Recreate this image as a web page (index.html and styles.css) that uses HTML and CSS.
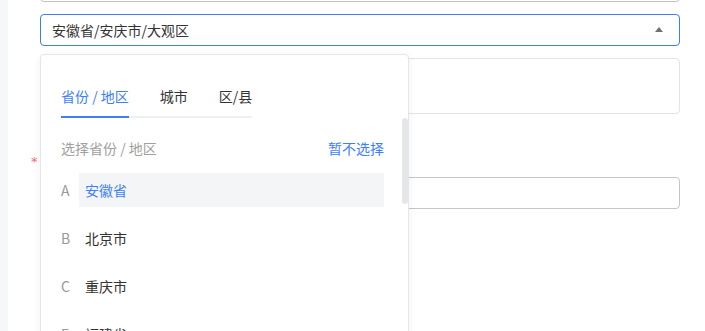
FILE: index.html
```html
<!DOCTYPE html>
<html lang="zh-CN">
<head>
<meta charset="utf-8">
<link rel="stylesheet" href="styles.css">
</head>
<body>
<div class="page">
  <div class="side"></div>
  <div class="main">
    <div class="field field-top"></div>
    <div class="field select">
      <span class="select-value">安徽省/安庆市/大观区</span>
      <span class="arrow"></span>
    </div>
    <div class="field textarea"></div>
    <div class="label"><span class="req">*</span></div>
    <div class="field input"></div>

    <div class="dropdown">
      <div class="tabs">
        <div class="tab active">省份 / 地区</div>
        <div class="tab">城市</div>
        <div class="tab">区/县</div>
      </div>
      <div class="head">
        <span class="hint">选择省份 / 地区</span>
        <span class="skip">暂不选择</span>
      </div>
      <div class="row">
        <span class="letter">A</span>
        <span class="name selected">安徽省</span>
      </div>
      <div class="row">
        <span class="letter">B</span>
        <span class="name">北京市</span>
      </div>
      <div class="row">
        <span class="letter">C</span>
        <span class="name">重庆市</span>
      </div>
      <div class="row">
        <span class="letter">F</span>
        <span class="name">福建省</span>
      </div>
      <div class="scrollbar"></div>
    </div>
  </div>
</div>
</body>
</html>
```

FILE: styles.css
```css
* { box-sizing: border-box; }
html, body {
  margin: 0;
  padding: 0;
  height: 100%;
  overflow: hidden;
  background: #ffffff;
  font-family: "Noto Sans CJK SC", "Noto Sans", sans-serif;
  font-size: 14px;
  color: #333333;
}
.page {
  display: flex;
  height: 331px;
}
.side {
  width: 8px;
  flex: none;
  background: #f6f7f9;
}
.main {
  flex: 1;
  position: relative;
  padding-left: 32px;
  padding-right: 25px;
}
.field {
  width: 640px;
  border: 1px solid #c6c8cc;
  border-radius: 4px;
  background: #fff;
}
.field-top {
  height: 32px;
  margin-top: -30px;
  border-color: #c0c2c6;
}
.select {
  height: 32px;
  margin-top: 12px;
  border-color: #3d7cf5;
  display: flex;
  align-items: center;
  justify-content: space-between;
  padding: 0 16px 0 11px;
}
.select-value {
  line-height: 20px;
  color: #333;
}
.arrow {
  width: 0;
  height: 0;
  border-left: 4px solid transparent;
  border-right: 4px solid transparent;
  border-bottom: 5px solid #707070;
  margin-top: -1px;
}
.textarea {
  height: 56px;
  margin-top: 12px;
  border-color: #e3e4e6;
}
.label {
  margin-top: 38px;
  margin-left: -9px;
  height: 20px;
  line-height: 20px;
  display: flex;
}
.req {
  color: #f56c6c;
  width: 12px;
  font-family: "DejaVu Sans", sans-serif;
  font-size: 13px;
  line-height: 20px;
}
.input {
  height: 32px;
  margin-top: 5px;
  border-color: #c4c6ca;
}
.dropdown {
  position: absolute;
  left: 32px;
  top: 54px;
  width: 369px;
  height: 300px;
  background: #fff;
  border: 1px solid #e4e6ea;
  border-radius: 4px;
  box-shadow: 0 2px 8px rgba(0, 0, 0, 0.06);
  padding: 31px 24px 0 20px;
}
.tabs {
  display: flex;
  gap: 31px;
  width: max-content;
  border-bottom: 2px solid #eeeff1;
}
.tab {
  line-height: 20px;
  padding-bottom: 10px;
  color: #333;
  position: relative;
}
.tab.active { color: #3d7eff; }
.tab.active::after {
  content: "";
  position: absolute;
  left: 0;
  right: 0;
  bottom: -2px;
  height: 2px;
  background: #3d7eff;
}
.head {
  margin-top: 20px;
  display: flex;
  justify-content: space-between;
  line-height: 20px;
}
.hint { color: #a0a0a0; }
.skip { color: #3d7eff; }
.row {
  display: flex;
  align-items: center;
  height: 34px;
  margin-top: 15px;
}
.row + .row { margin-top: 14px; }
.letter {
  width: 18px;
  flex: none;
  color: #999;
}
.name {
  flex: 1;
  height: 34px;
  line-height: 34px;
  padding-left: 6px;
  color: #333;
}
.name.selected {
  background: #f4f5f7;
  color: #3d7eff;
}
.scrollbar {
  position: absolute;
  right: 0;
  top: 63px;
  width: 6px;
  height: 86px;
  border-radius: 3px;
  background: #e5e6ea;
}
```
